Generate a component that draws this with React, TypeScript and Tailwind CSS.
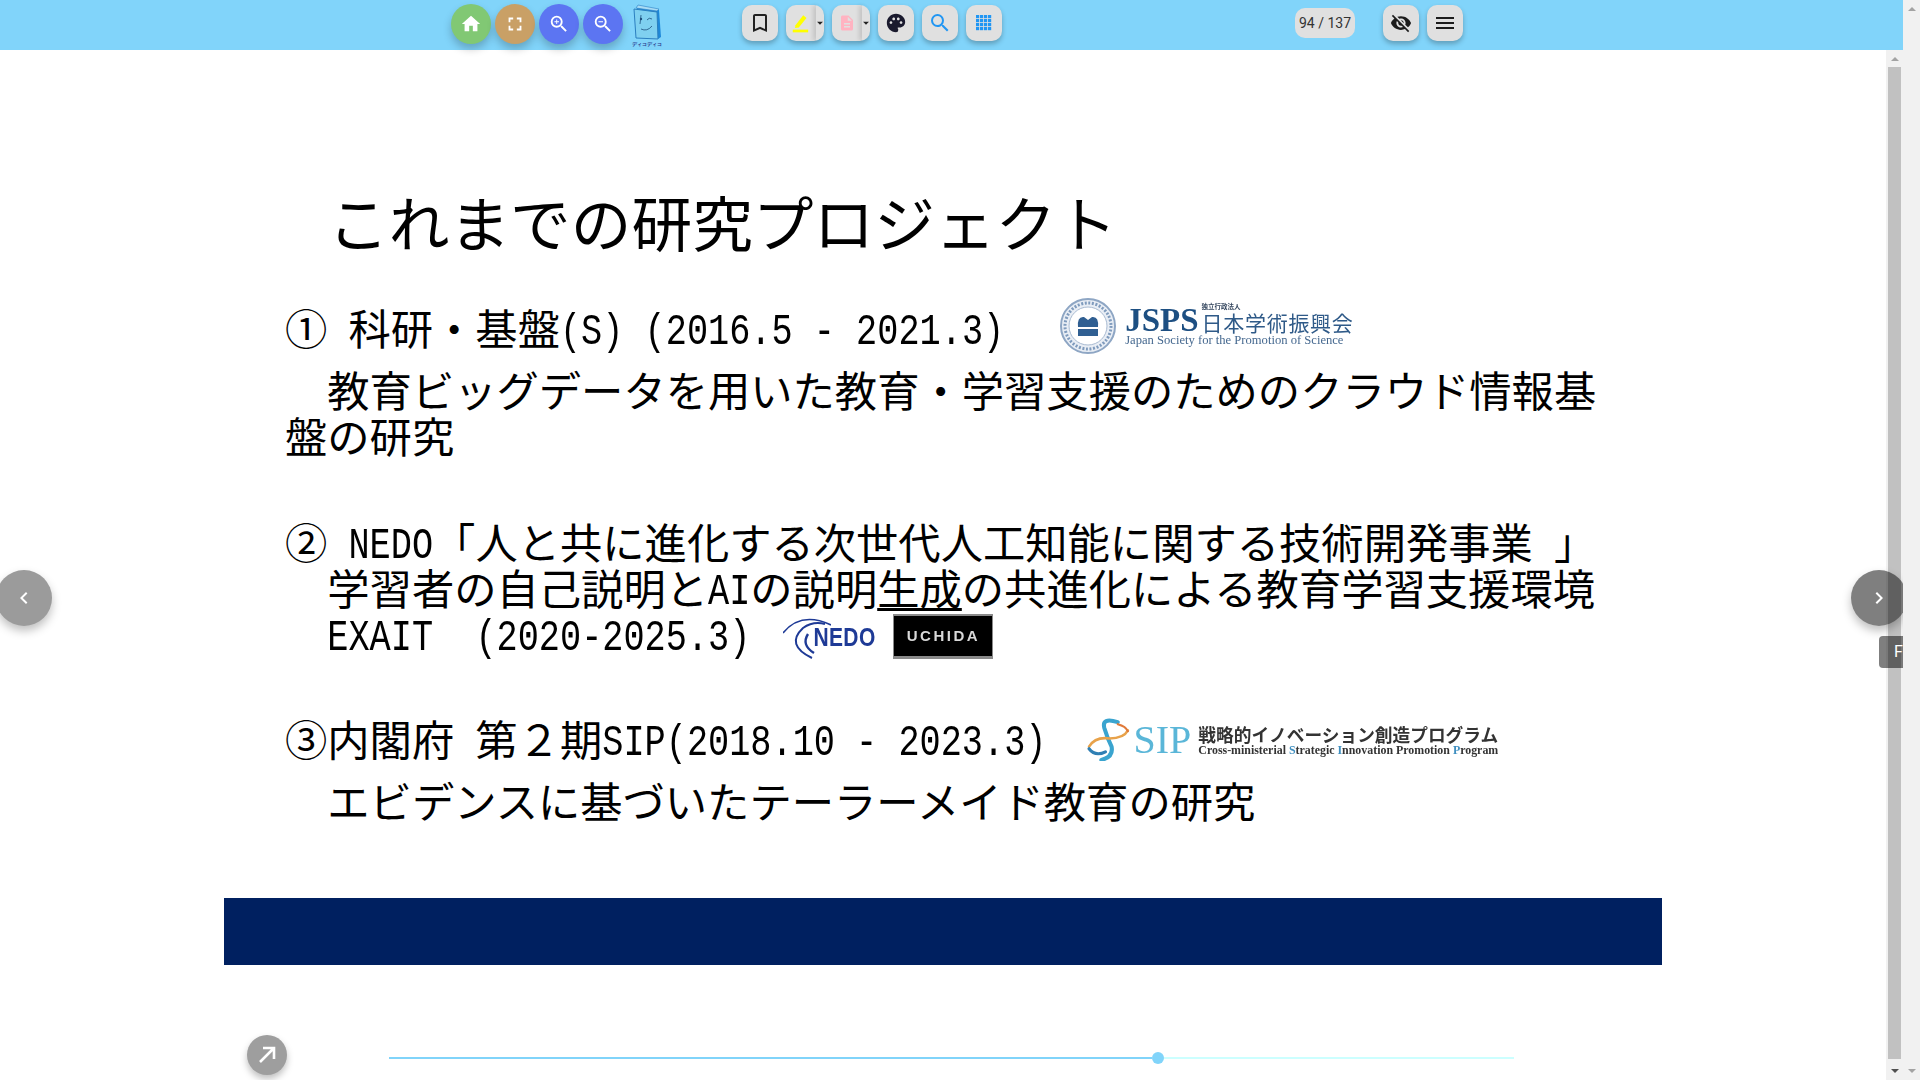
import {
  MdArrowDropDown,
  MdChevronLeft,
  MdChevronRight,
  MdDescription,
  MdFullscreen,
  MdHome,
  MdMenu,
  MdOutlineBookmarkBorder,
  MdPalette,
  MdSearch,
  MdVisibilityOff,
  MdZoomIn,
  MdZoomOut,
} from "react-icons/md";
import type { ReactNode } from "react";

/* half width latin, stands in for the slide's gothic font */
function Hw({ children }: { children: ReactNode }) {
  return (
    <span className="relative -top-[2px] inline-block origin-[50%_72%] scale-y-[1.28] font-['Liberation_Mono',monospace] text-[35.25px] leading-[30px] whitespace-pre">
      {children}
    </span>
  );
}

/* one text line of the slide, fixed height so inline-blocks can't push it */
function Line({ className = "", children }: { className?: string; children: ReactNode }) {
  return <div className={`flex h-[46px] items-center whitespace-pre ${className}`}>{children}</div>;
}

function Circle({ bg, children }: { bg: string; children: ReactNode }) {
  return (
    <button className={`flex h-10 w-10 items-center justify-center rounded-full text-white shadow-[0_5px_8px_rgba(0,0,0,0.22)] ${bg}`}>
      {children}
    </button>
  );
}

function ToolButton({ children }: { children: ReactNode }) {
  return (
    <button className="flex h-9 w-9 items-center justify-center rounded-[10px] bg-[#e0e0e0] shadow-[0_3px_5px_rgba(0,0,0,0.25)]">
      {children}
    </button>
  );
}

function SplitButton({ children }: { children: ReactNode }) {
  return (
    <div className="flex h-9 w-[38px] rounded-[10px] bg-[#e0e0e0] shadow-[0_3px_5px_rgba(0,0,0,0.25)]">
      <div className="flex w-[30px] items-center justify-center">{children}</div>
      <div className="relative w-2 rounded-r-[10px] shadow-[-3px_0_4px_rgba(0,0,0,0.12)]">
        <MdArrowDropDown className="absolute top-[11px] -left-[3px] text-[14px] text-[#222]" />
      </div>
    </div>
  );
}

function BookLogo() {
  return (
    <div className="ml-[2px] flex h-[46px] w-[36px] flex-col items-center">
      <svg viewBox="0 0 30 36" className="h-9 w-[30px] shrink-0">
        <path d="M5 2 L27 6 L29 33 L26 35 L5 6 Z" fill="#1e88d8" />
        <path d="M6 1 L27 5 L25 7 L4 4 Z" fill="#a9dcf5" stroke="#2a7fc4" strokeWidth="0.6" />
        <path d="M2 5 L25 8 L26 35 L4 34 Z" fill="#7fd0f0" stroke="#2b7fc0" strokeWidth="1" />
        <circle cx="9" cy="15" r="1.2" fill="#1d4f7d" />
        <path d="M9 11 L8 20 M15 16 Q17 13 20 15" stroke="#1d4f7d" strokeWidth="0.8" fill="none" />
        <path d="M9 25 Q15 28 20 22" stroke="#1d4f7d" strokeWidth="0.8" fill="none" />
      </svg>
      <span className="mt-px text-[5.2px] leading-[7px] font-bold whitespace-nowrap text-[#26358c]">ディコディコ</span>
    </div>
  );
}

function Toolbar() {
  return (
    <header className="relative z-10 flex h-[50px] shrink-0 items-start bg-[#81d4fa] pt-[5px] pl-[451px]">
      <div className="-mt-px flex gap-1">
        <Circle bg="bg-[#81c874]"><MdHome className="text-[22px]" /></Circle>
        <Circle bg="bg-[#c9a066]"><MdFullscreen className="text-[22px]" /></Circle>
        <Circle bg="bg-[#5c75f2]"><MdZoomIn className="text-[22px]" /></Circle>
        <Circle bg="bg-[#5c75f2]"><MdZoomOut className="text-[22px]" /></Circle>
        <BookLogo />
      </div>
      <div className="ml-[77px] flex gap-2">
        <ToolButton><MdOutlineBookmarkBorder className="text-[24px] text-[#222]" /></ToolButton>
        <SplitButton>
          <svg viewBox="0 0 20 20" className="h-[22px] w-[22px]">
            <path d="M5 12 L12 3 L15 5.5 L8 14 L4.5 14.5 Z" fill="#ffff00" />
            <rect x="2.5" y="16" width="14" height="2.5" fill="#ffff00" />
          </svg>
        </SplitButton>
        <SplitButton><MdDescription className="text-[18px] text-[#ffb3c1]" /></SplitButton>
        <ToolButton><MdPalette className="text-[22px] text-[#1a1a2e]" /></ToolButton>
        <ToolButton><MdSearch className="text-[24px] text-[#2196f3]" /></ToolButton>
        <ToolButton>
          <svg viewBox="0 0 16 16" className="h-4 w-4 fill-[#2196f3]">
            {[0, 4, 8, 12].map((y) =>
              [0, 4, 8, 12].map((x) => <rect key={`${x}-${y}`} x={x} y={y} width="3.2" height="3.2" />),
            )}
          </svg>
        </ToolButton>
      </div>
      <div className="mt-[3px] ml-[293px] flex h-[30px] w-[60px] items-center justify-center rounded-[10px] bg-[#e0e0e0] font-['Roboto',sans-serif] text-[14px] text-[#333]">
        94 / 137
      </div>
      <div className="ml-7 flex gap-2">
        <ToolButton><MdVisibilityOff className="text-[22px] text-[#1c1c1c]" /></ToolButton>
        <ToolButton><MdMenu className="text-[24px] text-[#1c1c1c]" /></ToolButton>
      </div>
    </header>
  );
}

function JspsLogo() {
  return (
    <div className="-mt-[2px] ml-[55px] flex h-[58px] w-[292px] shrink-0 items-center blur-[0.5px]">
      <svg viewBox="0 0 58 58" className="h-[58px] w-[58px] shrink-0">
        <circle cx="29" cy="29" r="27" fill="#e9eef5" stroke="#8ea6c4" strokeWidth="2" />
        <circle cx="29" cy="29" r="19" fill="#fff" stroke="#a9bbd2" strokeWidth="1" />
        <circle cx="29" cy="29" r="23" fill="none" stroke="#7f9bbd" strokeWidth="3" strokeDasharray="2 1.6" />
        <path d="M19 30 Q18 19 25 20 L29 23 L33 20 Q40 19 39 30 Z" fill="#305f92" />
        <rect x="19" y="32" width="20" height="7" fill="#305f92" />
      </svg>
      <div className="mb-[5px] ml-2 flex flex-col">
        <div className="flex h-[38px] items-end">
          <span className="font-['Liberation_Serif',serif] text-[33px] leading-[36px] font-bold text-[#1d4f82]">JSPS</span>
          <div className="ml-[3px] flex flex-col pb-[3px] text-[#2f5a88]">
            <span className="text-[6.5px] leading-[8px] font-bold text-[#34465e]">独立行政法人</span>
            <span className="text-[21px] leading-[25px] tracking-[0.7px] whitespace-nowrap">日本学術振興会</span>
          </div>
        </div>
        <span className="-mt-1 font-['Liberation_Serif',serif] text-[12.6px] leading-[13px] whitespace-nowrap text-[#45688f]">
          Japan Society for the Promotion of Science
        </span>
      </div>
    </div>
  );
}

function NedoLogo() {
  return (
    <div className="mt-[9px] ml-[33px] flex h-[42px] w-[90px] shrink-0 items-center blur-[0.4px]">
      <svg viewBox="0 0 48 42" className="h-[42px] w-[48px] shrink-0" fill="none" stroke="#1e3a96">
        <path d="M0 16 Q18 -6 48 8" strokeWidth="1.6" />
        <path d="M29 41 Q2 28 20 11 Q30 4 42 7" strokeWidth="2" />
        <path d="M31 36 Q18 28 25 17" strokeWidth="2.4" />
      </svg>
      <span className="-ml-[18px] inline-block scale-y-[1.2] font-['Liberation_Sans',sans-serif] text-[21px] font-bold tracking-[0.4px] text-[#1e3a96]">NEDO</span>
    </div>
  );
}

function UchidaLogo() {
  return (
    <div className="mt-[7px] ml-5 flex h-[45px] w-[100px] shrink-0 items-center justify-center border-t-2 border-r border-b-[3px] border-l border-[#8a8a8a] bg-black blur-[0.4px]">
      <span className="font-['Liberation_Sans',sans-serif] text-[15px] font-bold tracking-[2.5px] text-[#d8d8d8]">UCHIDA</span>
    </div>
  );
}

function SipLogo() {
  return (
    <div className="mt-[3px] ml-10 flex h-[46px] w-[414px] shrink-0 items-center blur-[0.5px]">
      <svg viewBox="1 0 40 42" className="h-[43px] w-[43px] shrink-0" fill="none" strokeLinecap="round">
        <path d="M30 4 Q14 -1 17 10 Q20 20 24 28 Q26 38 14 41" stroke="#3aa4cf" strokeWidth="4" />
        <path d="M2 28 Q8 18 22 20 Q36 20 40 12" stroke="#e8a24a" strokeWidth="2.5" />
        <path d="M2 30 Q8 38 18 33" stroke="#2f7fb4" strokeWidth="3" />
        <path d="M30 6 Q38 8 40 13" stroke="#e07a3a" strokeWidth="2" />
      </svg>
      <span className="ml-1 font-['Liberation_Serif',serif] text-[40px] leading-[42px] text-[#5ab6d8]">SIP</span>
      <div className="ml-[7px] flex flex-col text-[#333]">
        <span className="text-[17.7px] leading-[21px] font-bold whitespace-nowrap">戦略的イノベーション創造プログラム</span>
        <span className="font-['Liberation_Serif',serif] text-[11.9px] leading-[11px] font-bold whitespace-nowrap">
          Cross-ministerial <span className="text-[#3f8fc0]">S</span>trategic <span className="text-[#3f8fc0]">I</span>nnovation Promotion <span className="text-[#3f8fc0]">P</span>rogram
        </span>
      </div>
    </div>
  );
}

function Slide() {
  return (
    <section className="w-[1438px] pt-[141px] font-['Noto_Sans_CJK_JP','Liberation_Sans',sans-serif] text-[42.3px] leading-[46px] text-black">
      <h1 className="pl-[104px] text-[60.7px] leading-[60px] font-normal">これまでの研究プロジェクト</h1>

      <div className="mt-[53px] pl-[61px]">
        <Line>
          <span>①<Hw> </Hw>科研・基盤<Hw>(S) (2016.5 - 2021.3)</Hw></span>
          <JspsLogo />
        </Line>
        <Line className="mt-4">{"　教育ビッグデータを用いた教育・学習支援のためのクラウド情報基"}</Line>
        <Line>盤の研究</Line>

        <Line className="mt-[60px]">
          <span>②<Hw> NEDO</Hw>「人と共に進化する次世代人工知能に関する技術開発事業<Hw> </Hw>」</span>
        </Line>
        <Line>
          <span>
            {"　学習者の自己説明と"}<Hw>AI</Hw>の説明
            <span className="underline decoration-[3px] underline-offset-[3px] [text-decoration-skip-ink:none]">生成</span>
            の共進化による教育学習支援環境
          </span>
        </Line>
        <Line>
          <span>{"　"}<Hw>EXAIT  (2020-2025.3)</Hw></span>
          <NedoLogo />
          <UchidaLogo />
        </Line>

        <Line className="mt-[59px]">
          <span>③内閣府<Hw> </Hw>第２期<Hw>SIP(2018.10 - 2023.3)</Hw></span>
          <SipLogo />
        </Line>
        <Line className="mt-4">{"　エビデンスに基づいたテーラーメイド教育の研究"}</Line>
      </div>

      <div className="mt-[75px] h-[67px] bg-[#002060]" />
    </section>
  );
}

function ArrowUp({ color }: { color: string }) {
  return <div className={`mx-auto h-0 w-0 border-x-[4px] border-b-[4px] border-x-transparent ${color}`} />;
}

function ArrowDown({ color }: { color: string }) {
  return <div className={`mx-auto h-0 w-0 border-x-[4px] border-t-[4px] border-x-transparent ${color}`} />;
}

function Scrollbar({ inner }: { inner?: boolean }) {
  return (
    <aside className="flex w-[17px] shrink-0 flex-col bg-[#f1f1f1]">
      <div className="flex h-[17px] shrink-0 items-center">
        <ArrowUp color="border-b-[#a3a3a3]" />
      </div>
      <div className="flex-1 px-[2px]">
        {inner && <div className="h-full bg-[#c1c1c1]" />}
      </div>
      <div className="flex h-[21px] shrink-0 items-start pt-[10px]">
        <ArrowDown color={inner ? "border-t-[#505050]" : "border-t-[#a3a3a3]"} />
      </div>
    </aside>
  );
}

export default function App() {
  return (
    <div lang="ja" className="flex h-screen w-full overflow-hidden bg-white">
      <div className="flex min-w-0 flex-1 flex-col">
        <Toolbar />
        <div className="relative flex min-h-0 flex-1 overflow-hidden">
          <main className="min-w-0 flex-1 pl-[224px]">
            <Slide />
          </main>
          <Scrollbar inner />

          <button className="absolute top-[520px] -left-1 flex h-14 w-14 items-center justify-center rounded-full bg-[#9b9b9b] text-white shadow-[0_5px_10px_rgba(0,0,0,0.25)]">
            <MdChevronLeft className="text-[24px]" />
          </button>
          <button className="absolute top-[520px] -right-1 flex h-14 w-14 items-center justify-center rounded-full bg-black/50 text-white shadow-[0_5px_10px_rgba(0,0,0,0.25)]">
            <MdChevronRight className="text-[24px]" />
          </button>
          <div className="absolute top-[586px] right-0 h-8 w-6 rounded-l bg-black/50 pt-1 pl-[15px] font-['Roboto',sans-serif] text-[16px] leading-6 text-white">
            F
          </div>

          <button className="absolute bottom-[5px] left-[247px] flex h-10 w-10 items-center justify-center rounded-full bg-[#9e9e9e] text-white shadow-[0_4px_7px_rgba(0,0,0,0.25)]">
            <svg viewBox="0 0 24 24" className="h-6 w-6" fill="none" stroke="currentColor" strokeWidth="2.6">
              <path d="M5 19 L18 6 M8 5 H19 V16" />
            </svg>
          </button>
          <div className="absolute bottom-[16px] left-[389px] flex h-3 w-[1125px] items-center">
            <div className="h-[2px] w-[763px] bg-[#81d4fa]" />
            <div className="h-3 w-3 rounded-full bg-[#81d4fa]" />
            <div className="h-[2px] flex-1 bg-[#ccffff]" />
          </div>
        </div>
      </div>
      <Scrollbar />
    </div>
  );
}
